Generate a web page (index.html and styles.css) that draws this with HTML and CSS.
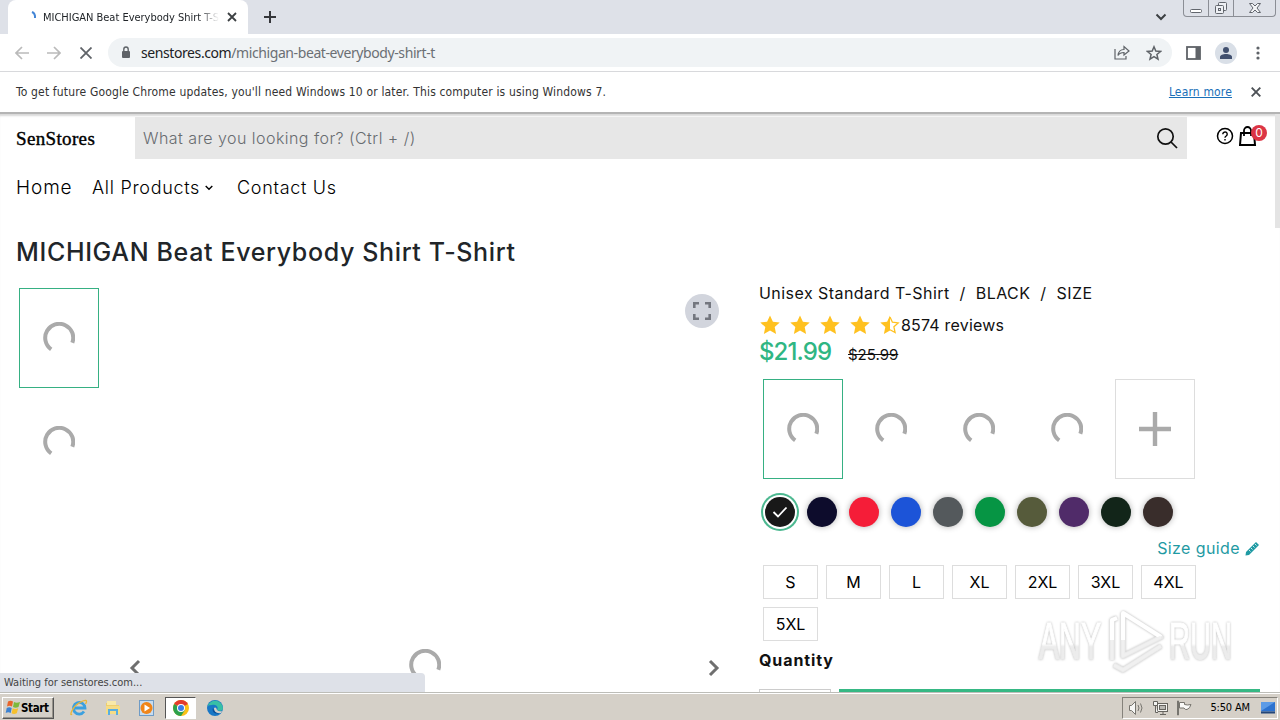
FILE: index.html
```
<!DOCTYPE html>
<html lang="en">
<head>
    <meta charset="UTF-8">
    <title>MICHIGAN Beat Everybody Shirt T-Shirt</title>
    <link rel="stylesheet" href="styles.css">
</head>
<body>
    <svg class="defs" width="0" height="0">
        <symbol id="spinner" viewBox="0 0 32 32">
            <path d="M8.2 27.3A14 14 0 1 1 29.3 20.8" fill="none" stroke="#aaa" stroke-width="4"/>
        </symbol>
        <symbol id="star" viewBox="0 0 20 20">
            <path d="M10 0.5l2.9 6.2 6.8.8-5 4.6 1.4 6.8L10 15.6l-6.1 3.3 1.4-6.8-5-4.6 6.8-.8z" fill="#ffc120"/>
        </symbol>
    </svg>

    <!-- Browser tabs -->
    <div class="tab-strip">
        <div class="tab">
            <svg class="tab-loader" width="16" height="16" viewBox="0 0 16 16"><path d="M7 3Q10.500 4.500 10 9" fill="none" stroke="#4285d6" stroke-width="2"/></svg>
            <span class="tab-title">MICHIGAN Beat Everybody Shirt T-Shirt</span>
            <svg width="10" height="10" viewBox="0 0 10 10"><path d="M1 1l8 8M9 1L1 9" stroke="#3c4043" stroke-width="1.8"/></svg>
        </div>
        <svg class="new-tab" width="12" height="12" viewBox="0 0 12 12"><path d="M6 0v12M0 6h12" stroke="#35363a" stroke-width="2"/></svg>
        <svg class="tab-search" width="12" height="8" viewBox="0 0 12 8"><path d="M1.5 1.5L6 6l4.500-4.500" fill="none" stroke="#3c4043" stroke-width="2"/></svg>
        <div class="window-buttons">
            <span><svg width="14" height="14" viewBox="0 0 14 14"><rect x="1.500" y="8.500" width="11" height="3" rx="1" fill="#fff" stroke="#62666d"/></svg></span>
            <span><svg width="14" height="14" viewBox="0 0 14 14" fill="#eef0f4" stroke="#62666d"><rect x="4.500" y="1.500" width="8" height="8" rx="1"/><rect x="1.500" y="4.500" width="8" height="8" rx="1"/><rect x="4.500" y="7.500" width="2" height="2"/></svg></span>
            <span class="wide"><svg width="14" height="12" viewBox="0 0 14 12"><path d="M1.500 1.500h3L7 4l2.500-2.500h3L9 6l3.500 4.500h-3L7 8l-2.500 2.500h-3L5 6z" fill="#f4f5f7" stroke="#62666d"/></svg></span>
        </div>
    </div>

    <!-- Address bar -->
    <div class="toolbar">
        <svg width="14" height="14" viewBox="0 0 14 14"><path d="M14 7H1M7 1L1 7l6 6" fill="none" stroke="#bababa" stroke-width="1.700"/></svg>
        <svg width="14" height="14" viewBox="0 0 14 14"><path d="M0 7h13M7 1l6 6-6 6" fill="none" stroke="#bababa" stroke-width="1.700"/></svg>
        <svg class="stop" width="12" height="12" viewBox="0 0 12 12"><path d="M.5.5l11 11M11.500.5l-11 11" stroke="#5f6368" stroke-width="1.800"/></svg>
        <div class="address">
            <svg width="10" height="13" viewBox="0 0 10 13"><rect x="1" y="5" width="8" height="7" rx="1" fill="#5f6368"/><path d="M2.800 5V3.200a2.200 2.200 0 0 1 4.400 0V5" fill="none" stroke="#5f6368" stroke-width="1.400"/></svg>
            <span class="url">senstores.com<i>/michigan-beat-everybody-shirt-t</i></span>
            <svg width="16" height="15" viewBox="0 0 16 15" fill="none" stroke="#5f6368" stroke-width="1.200"><path d="M1 4v10h11v-3"/><path d="M4 10.500C4.500 6 7 4.500 10 4.500V1.500l5 4.500-5 4V7.500C7.500 7.500 5.500 8 4 10.500z"/></svg>
            <svg width="16" height="16" viewBox="0 0 16 16"><path d="M8 1.800l1.800 4.300 4.700.4-3.600 3 1.100 4.600L8 11.700l-4 2.400 1.100-4.600-3.600-3 4.700-.4z" fill="none" stroke="#5f6368" stroke-width="1.500"/></svg>
        </div>
        <svg class="panel-icon" width="15" height="14" viewBox="0 0 15 14"><rect x="1" y="1" width="13" height="12" fill="none" stroke="#5f6368" stroke-width="1.800"/><path d="M9.500 1H14v12H9.500z" fill="#5f6368"/></svg>
        <div class="avatar"><svg width="14" height="14" viewBox="0 0 14 14" fill="#41506f"><circle cx="7" cy="4" r="3"/><path d="M1 13v-2c0-2 3-3 6-3s6 1 6 3v2z"/></svg></div>
        <svg class="menu-icon" width="4" height="14" viewBox="0 0 4 14" fill="#5f6368"><circle cx="2" cy="2" r="1.600"/><circle cx="2" cy="7" r="1.600"/><circle cx="2" cy="12" r="1.600"/></svg>
    </div>

    <div class="infobar">
        <span class="info-text">To get future Google Chrome updates, you'll need Windows 10 or later. This computer is using Windows 7.</span>
        <a class="learn">Learn more</a>
        <svg width="10" height="10" viewBox="0 0 10 10"><path d="M.7.7l8.600 8.600M9.300.7L.7 9.300" stroke="#4d5156" stroke-width="1.900"/></svg>
    </div>

    <!-- Store page -->
    <div class="page">
        <div class="scroll-thumb"></div>
        <header class="store-header">
            <div class="logo">SenStores</div>
            <div class="search">
                <span class="placeholder">What are you looking for? (Ctrl + /)</span>
                <svg width="22" height="22" viewBox="0 0 22 22" fill="none" stroke="#111" stroke-width="1.700"><circle cx="9.500" cy="9.500" r="7.700"/><path d="M15 15l6 6"/></svg>
            </div>
            <div class="header-icons">
                <svg width="18" height="18" viewBox="0 0 18 18"><circle cx="9" cy="9" r="7.500" fill="none" stroke="#000" stroke-width="1.500"/><path d="M6.800 7.200a2.200 2.200 0 1 1 3.400 1.800C9.300 9.600 9 9.900 9 10.800M9 12v1.500" fill="none" stroke="#000" stroke-width="1.400"/></svg>
                <div class="cart">
                    <svg width="18" height="22" viewBox="0 0 18 22" fill="none" stroke="#000" stroke-width="2"><path d="M2 8h13l1 12H1z"/><path d="M5 11V5.500a3.500 3.500 0 0 1 7 0V11" stroke-width="1.800"/></svg>
                    <span class="badge">0</span>
                </div>
            </div>
        </header>

        <nav class="menu">
            <a class="m-home">Home</a>
            <a class="m-products">All Products</a>
            <svg width="8" height="6" viewBox="0 0 8 6"><path d="M.7 1L4 4.300 7.300 1" fill="none" stroke="#000" stroke-width="1.400"/></svg>
            <a class="m-contact">Contact Us</a>
        </nav>

        <h1>MICHIGAN Beat Everybody Shirt T-Shirt</h1>

        <div class="product">
            <div class="thumbs">
                <div class="tile active"><svg class="spin"><use href="#spinner"/></svg></div>
                <div class="tile"><svg class="spin"><use href="#spinner"/></svg></div>
            </div>
            <div class="gallery">
                <svg class="arrow" width="12" height="18" viewBox="0 0 12 18"><path d="M10 2L3 9l7 7" fill="none" stroke="#6f6f6f" stroke-width="3"/></svg>
                <svg class="spin"><use href="#spinner"/></svg>
                <svg class="arrow" width="12" height="18" viewBox="0 0 12 18"><path d="M2 2l7 7-7 7" fill="none" stroke="#6f6f6f" stroke-width="3"/></svg>
                <div class="fullscreen"><svg width="18" height="18" viewBox="0 0 18 18"><path d="M1.300 6V1.300H6M12 1.300h4.700V6M16.700 12v4.700H12M6 16.700H1.300V12" fill="none" stroke="#74777f" stroke-width="2.600"/></svg></div>
            </div>

            <div class="details">
                <div class="variant">Unisex Standard T-Shirt &nbsp;/&nbsp; BLACK &nbsp;/&nbsp; SIZE</div>
                <div class="rating">
                    <svg><use href="#star"/></svg>
                    <svg><use href="#star"/></svg>
                    <svg><use href="#star"/></svg>
                    <svg><use href="#star"/></svg>
                    <svg viewBox="0 0 20 20"><path d="M10 .5v15.100l-6.100 3.300 1.400-6.800-5-4.600 6.800-.8z" fill="#ffc120"/><path d="M10 2l2.400 5.200 5.800.7-4.300 3.900 1.200 5.700L10 14.700" fill="none" stroke="#ffc120" stroke-width="1.300"/></svg>
                    <span class="reviews">8574 reviews</span>
                </div>
                <div class="prices"><span class="price">$21.99</span><s>$25.99</s></div>
                <div class="styles">
                    <div class="tile active"><svg class="spin"><use href="#spinner"/></svg></div>
                    <div class="tile"><svg class="spin"><use href="#spinner"/></svg></div>
                    <div class="tile"><svg class="spin"><use href="#spinner"/></svg></div>
                    <div class="tile"><svg class="spin"><use href="#spinner"/></svg></div>
                    <div class="tile more"><svg width="32" height="34" viewBox="0 0 32 34"><path d="M16 0v34M0 17h32" stroke="#aaa" stroke-width="4.400"/></svg></div>
                </div>
                <div class="colors">
                    <span class="black"><svg width="16" height="12" viewBox="0 0 16 12"><path d="M1.500 6l4.500 4.500L14.500 1.500" fill="none" stroke="#fff" stroke-width="1.800"/></svg></span>
                    <span class="navy"></span>
                    <span class="red"></span>
                    <span class="royal"></span>
                    <span class="charcoal"></span>
                    <span class="green"></span>
                    <span class="military"></span>
                    <span class="purple"></span>
                    <span class="forest"></span>
                    <span class="brown"></span>
                </div>
                <div class="size-guide">
                    <span>Size guide</span>
                    <svg width="15" height="15" viewBox="0 0 15 15"><path d="M1 11L11 1l3 3L4 14l-3.500.5z" fill="#1f9aa3"/><path d="M4 9l1.500 1.500M6 7l1.500 1.500M8 5l1.500 1.500M10 3l1.500 1.500" stroke="#fff" stroke-width=".8"/></svg>
                </div>
                <div class="sizes">
                    <span>S</span><span>M</span><span>L</span><span>XL</span><span>2XL</span><span>3XL</span><span>4XL</span><span>5XL</span>
                </div>
                <div class="quantity">Quantity</div>
                <div class="buy-row">
                    <div class="qty-input"></div>
                    <div class="add-to-cart"></div>
                </div>
            </div>
        </div>

        <div class="status">Waiting for senstores.com...</div>

        <svg class="watermark" width="200" height="68" viewBox="0 0 200 68">
            <defs>
                <linearGradient id="fade" x1="0" y1="0" x2="0" y2="1">
                    <stop offset=".55" stop-color="#fff"/>
                    <stop offset=".6" stop-color="#ececec"/>
                </linearGradient>
            </defs>
            <g font-family="Liberation Sans Narrow, Liberation Sans, sans-serif" font-size="52" fill="url(#fade)" stroke="url(#fade)" stroke-width="1.200">
                <text x="2" y="51" textLength="62" lengthAdjust="spacingAndGlyphs">ANY</text>
                <text x="132" y="51" textLength="63" lengthAdjust="spacingAndGlyphs">RUN</text>
            </g>
            <g fill="none" stroke-linejoin="round">
                <path d="M75 52V12l5-2M86 5v43l38-19L86 5M77 57l9 5 38-24" stroke="#e9e9e9" stroke-width="5"/>
                <path d="M75 32V12l5-2M86 32V5l38 24" stroke="#fff" stroke-width="4"/>
                <path d="M75 32v20M86 32v16l38-19M77 57l9 5 38-24" stroke="#f0f0f0" stroke-width="3"/>
            </g>
        </svg>
    </div>

    <!-- Windows taskbar -->
    <div class="taskbar">
        <div class="start">
            <svg width="16" height="15" viewBox="0 0 16 15"><path d="M3 1.500q2.500-1.500 5 0L7 6.500q-2.500-1.300-5 0z" fill="#e8642a"/><path d="M9 2q2.500 1.300 6 0l-1.500 5q-3 1.300-5.500 0z" fill="#7db93c"/><path d="M1.700 8q2.500-1.300 5 0l-1 5q-2.500-1.500-5 0z" fill="#3c82d2"/><path d="M7.700 8.300q2.500 1.300 5.500 0l-1.400 5q-3 1.300-5.200 0z" fill="#f6c02d"/></svg>
            <b>Start</b>
        </div>
        <div class="task"><svg width="18" height="18" viewBox="0 0 18 18" fill="none"><path d="M14 12.500A5.800 5.800 0 1 1 15 9H5" stroke="#3ba0df" stroke-width="2.800"/><path d="M2 15C-1 18 2 8 9 4s9-3 6.500 1" stroke="#e9b63a" stroke-width="1.300"/></svg></div>
        <div class="task"><svg width="18" height="18" viewBox="0 0 18 18"><path d="M2 4h5l1 2h7v9H2z" fill="#edcf6e"/><path d="M3 2h9v4H3z" fill="#f8e9a9"/><path d="M2 7h14v8H2z" fill="#f5dc86"/><path d="M5 16v-5h8v5" fill="none" stroke="#59aee0" stroke-width="2"/></svg></div>
        <div class="task"><svg width="18" height="18" viewBox="0 0 18 18"><rect x="1.500" y="1.500" width="14" height="15" fill="#c8dcef" stroke="#6e9bc6"/><circle cx="8.500" cy="9" r="6" fill="#f08519"/><path d="M6.500 5.500v7l5.500-3.500z" fill="#fff"/></svg></div>
        <div class="task current"><svg width="16" height="16" viewBox="0 0 16 16"><circle cx="8" cy="8" r="8" fill="#fbc116"/><path d="M8 8L1.100 4A8 8 0 0 1 14.900 4z" fill="#e33b2e"/><path d="M8 8L1.100 4A8 8 0 0 0 8 16l4-6z" fill="#2da14c"/><circle cx="8" cy="8" r="4" fill="#fff"/><circle cx="8" cy="8" r="3" fill="#3b7de8"/></svg></div>
        <div class="task"><svg width="16" height="16" viewBox="0 0 16 16"><circle cx="8" cy="8" r="8" fill="#1877c5"/><path d="M.5 6A8 8 0 0 1 16 8c0 3-4 3.500-6 2 2-3-1-6-5-5Q2 5 .5 6z" fill="#38bfa5"/><path d="M6 8c-1.500 4 2 6.500 7 5.500A8 8 0 0 1 6 8z" fill="#0c4f98"/><path d="M7 8q2-1.500 3 2 2 2 5 1l-1 2Q7 14 7 8z" fill="#d5d0c8"/></svg></div>
        <div class="tray">
            <svg width="17" height="16" viewBox="0 0 17 16" fill="#f7f7f5" stroke="#77756f"><path d="M1.500 5.500h2l4-4v13l-4-4h-2z"/><path d="M10 5q2 3 0 6M12.500 3.500q3 4.500 0 9" fill="none"/></svg>
            <svg width="17" height="16" viewBox="0 0 17 16" fill="#f3f3f0" stroke="#66645f"><rect x="5.500" y="3.500" width="10" height="8"/><rect x="7.500" y="5.500" width="6" height="4" fill="#b9b8b3"/><path d="M8 14.500h6M11 12v2M1.500 1.500h4v4h-4zM3.500 6v6.500H6"/></svg>
            <svg width="17" height="16" viewBox="0 0 17 16" fill="#fafaf8" stroke="#77756f"><path d="M1.500 1v14h1V1zM3.500 2.500h5v2q3 1 6.500 0-1 4-4 5-2 .5-3-1.500h-4.500z"/></svg>
            <span class="clock">5:50 AM</span>
            <svg width="16" height="14" viewBox="0 0 16 14"><path d="M1 1h14v9.500H1z" fill="#2c72cf"/><path d="M1 10V1h14z" fill="#5c9be6"/><path d="M1 10.500h14v2H1z" fill="#234679"/></svg>
        </div>
    </div>
</body>
</html>
```
FILE: styles.css
```
* {
    box-sizing: border-box;
}

body {
    margin: 0;
    width: 1280px;
    height: 720px;
    overflow: hidden;
    display: flex;
    flex-direction: column;
    background: #fff;
    color: #212529;
    font-family: "DejaVu Sans Condensed", "DejaVu Sans", sans-serif;
    font-size: 11px;
}

svg {
    display: block;
    flex-shrink: 0;
}

.defs {
    position: absolute;
}

/* Browser chrome */
.tab-strip {
    height: 34px;
    flex-shrink: 0;
    display: flex;
    align-items: center;
    background: #dee1e8;
}

.tab {
    width: 240px;
    height: 34px;
    margin-left: 8px;
    padding: 0 11px 0 17px;
    display: flex;
    align-items: center;
    background: #fff;
    border-radius: 8px 8px 0 0;
}

.tab-title {
    width: 176px;
    margin: 0 8px 0 2px;
    overflow: hidden;
    white-space: nowrap;
    letter-spacing: -0.02px;
    -webkit-mask-image: linear-gradient(90deg, #000 155px, transparent 176px);
    mask-image: linear-gradient(90deg, #000 155px, transparent 176px);
}

.new-tab {
    margin-left: 16px;
}

.tab-search {
    margin-left: auto;
}

.window-buttons {
    height: 17px;
    margin: 0 4px 0 16px;
    align-self: flex-start;
    display: flex;
    border: 1px solid #8b8e95;
    border-top: none;
    border-radius: 0 0 4px 4px;
}

.window-buttons span {
    width: 25px;
    display: flex;
    align-items: center;
    justify-content: center;
    border-right: 1px solid #8b8e95;
}

.window-buttons .wide {
    width: 41px;
    border: none;
}

.toolbar {
    height: 38px;
    flex-shrink: 0;
    display: flex;
    align-items: center;
    padding: 0 15px;
    gap: 18px;
    border-bottom: 1px solid #d8d9dc;
}

.stop {
    margin-left: 1px;
}

.address {
    width: 1064px;
    height: 29px;
    margin-left: -2px;
    padding: 0 10px 0 13px;
    display: flex;
    align-items: center;
    gap: 16px;
    border-radius: 15px;
    background: #f0f3f5;
}

.url {
    flex: 1;
    margin-left: -6px;
    font-family: "Noto Sans", sans-serif;
    font-size: 14px;
    letter-spacing: -0.41px;
    color: #202124;
}

.url i {
    font-style: normal;
    color: #6b6f74;
}

.panel-icon {
    margin-left: -4px;
}

.avatar {
    width: 22px;
    height: 22px;
    margin-left: -4px;
    display: flex;
    align-items: center;
    justify-content: center;
    border-radius: 50%;
    background: #d9dfe7;
}

.menu-icon {
    margin-left: 1px;
}

.infobar {
    height: 42px;
    flex-shrink: 0;
    display: flex;
    align-items: center;
    padding: 0 19px 1px 16px;
    border-bottom: 2px solid #b4b4b4;
    font-size: 12px;
    letter-spacing: 0.16px;
    color: #333;
}

.learn {
    margin: 0 19px 0 auto;
    color: #1a6fb8;
    text-decoration: underline;
}

/* Store */
.page {
    position: relative;
    height: 578px;
    flex-shrink: 0;
    overflow: hidden;
    font-family: Inter, sans-serif;
    box-shadow: inset 0 3px 2px -1px #d8d8d8;
}

.scroll-thumb {
    position: absolute;
    right: 0;
    top: 0;
    width: 5px;
    height: 114px;
    background: #e4e4e4;
}

.store-header {
    height: 42px;
    margin-top: 3px;
    padding-left: 16px;
    display: flex;
}

.logo {
    width: 119px;
    padding-top: 11px;
    font-family: "Liberation Serif", serif;
    font-size: 19px;
    line-height: 22px;
    letter-spacing: 0.35px;
    color: #000;
    -webkit-text-stroke: 0.4px #000;
}

.search {
    width: 1052px;
    padding: 0 9px 0 8px;
    display: flex;
    align-items: center;
    justify-content: space-between;
    background: #e7e7e7;
    font-size: 16px;
    letter-spacing: 0.45px;
    color: #686c70;
}

.placeholder {
    font-weight: 300;
}

.header-icons {
    margin-left: 29px;
    padding-top: 8px;
    display: flex;
    gap: 5px;
}

.header-icons > svg {
    margin-top: 2px;
}

.cart {
    position: relative;
}

.badge {
    position: absolute;
    left: 12px;
    top: 0;
    width: 16px;
    height: 16px;
    border-radius: 50%;
    background: #dc3545;
    color: #fff;
    font-size: 12px;
    line-height: 16px;
    text-align: center;
}

.menu {
    height: 57px;
    padding-left: 16px;
    display: flex;
    align-items: center;
    font-size: 18px;
    font-weight: 300;
    letter-spacing: 0.7px;
    color: #000;
}

.m-home {
    width: 76px;
    font-size: 19px;
    letter-spacing: 0.9px;
}

.m-products {
    width: 113px;
}

.m-contact {
    margin-left: 24px;
}

h1 {
    height: 72px;
    margin: 0;
    padding-left: 16px;
    font-size: 25px;
    font-weight: 500;
    line-height: 73px;
    letter-spacing: 0.64px;
}

.product {
    display: flex;
    padding-left: 19px;
}

.thumbs {
    width: 100px;
    display: flex;
    flex-direction: column;
    gap: 4px;
}

.tile {
    width: 80px;
    height: 100px;
    display: flex;
    align-items: center;
    justify-content: center;
}

.tile.active {
    border: 1px solid #36b083;
}

.tile.more {
    border: 1px solid #ddd;
}

.spin {
    width: 32px;
    height: 32px;
}

.gallery {
    position: relative;
    width: 612px;
    height: 760px;
    padding: 0 11px 0 10px;
    display: flex;
    align-items: center;
    justify-content: space-between;
}

.gallery .spin {
    margin-bottom: 6px;
}

.fullscreen {
    position: absolute;
    right: 12px;
    top: 6px;
    width: 34px;
    height: 34px;
    display: flex;
    align-items: center;
    justify-content: center;
    border-radius: 50%;
    background: #d2d5dd;
}

.details {
    width: 501px;
    margin-left: 28px;
    margin-top: -8px;
    font-size: 16px;
    color: #111;
}

.variant {
    height: 28px;
    line-height: 26px;
    letter-spacing: 0.45px;
    white-space: nowrap;
}

.rating {
    height: 34px;
    display: flex;
    align-items: center;
    gap: 8px;
}

.rating svg {
    width: 22px;
    height: 20px;
}

.reviews {
    margin-left: -8px;
    letter-spacing: 0.2px;
}

.prices {
    height: 37px;
    display: flex;
    align-items: baseline;
    line-height: 20px;
}

.price {
    width: 89px;
    font-size: 24px;
    font-weight: 500;
    letter-spacing: -0.9px;
    color: #2fb683;
}

.prices s {
    font-size: 15px;
}

.styles {
    display: flex;
    gap: 8px;
    padding-left: 4px;
}

.colors {
    height: 59px;
    padding: 7px 0 0 6px;
    display: flex;
    align-items: center;
    gap: 12px;
}

.colors span {
    width: 30px;
    height: 30px;
    display: flex;
    align-items: center;
    justify-content: center;
    border-radius: 50%;
    box-shadow: 0 0 6px rgba(0, 0, 0, 0.3);
}

.colors .black {
    background: #181818;
    box-shadow: 0 0 0 2px #fff, 0 0 0 4px #4cb890;
}

.navy { background: #0d0c2c; }
.red { background: #f51d38; }
.royal { background: #1c54d8; }
.charcoal { background: #54595c; }
.green { background: #069544; }
.military { background: #565b3b; }
.purple { background: #502b69; }
.forest { background: #122519; }
.brown { background: #392d2b; }

.size-guide {
    height: 20px;
    margin-bottom: 7px;
    display: flex;
    justify-content: flex-end;
    align-items: center;
    gap: 5px;
    line-height: 20px;
    letter-spacing: 0.4px;
    color: #1f9aa3;
}

.sizes {
    width: 445px;
    display: flex;
    flex-wrap: wrap;
    gap: 8px;
    padding-left: 4px;
}

.sizes span {
    width: 55px;
    height: 34px;
    border: 1px solid #ddd;
    line-height: 32px;
    text-align: center;
    color: #000;
}

.quantity {
    height: 48px;
    line-height: 39px;
    font-weight: 700;
    letter-spacing: 0.9px;
}

.buy-row {
    display: flex;
    gap: 8px;
}

.qty-input {
    width: 72px;
    height: 40px;
    border: 1px solid #ccc;
}

.add-to-cart {
    flex: 1;
    height: 40px;
    background: #36b884;
}

.status {
    position: absolute;
    left: 0;
    bottom: 0;
    width: 425px;
    height: 19px;
    padding-left: 4px;
    border-radius: 0 4px 0 0;
    background: #dee1e8;
    font: 11px/20px "DejaVu Sans Condensed", sans-serif;
    color: #444;
}

.watermark {
    position: absolute;
    left: 1037px;
    top: 494px;
    filter: drop-shadow(0 0 1px #bbb);
}

/* Taskbar */
.taskbar {
    height: 28px;
    flex-shrink: 0;
    display: flex;
    align-items: center;
    padding: 2px 2px 0;
    border-top: 1px solid #bdbdb8;
    box-shadow: inset 0 1px #fff;
    background: #d5d0c8;
    color: #000;
}

.start {
    width: 52px;
    height: 22px;
    margin-right: 9px;
    padding-left: 2px;
    display: flex;
    align-items: center;
    border: 1px solid;
    border-color: #fff #555 #555 #fff;
    box-shadow: inset -1px -1px #98948c;
}

.start b {
    font-size: 11.5px;
    letter-spacing: -0.35px;
}

.task {
    width: 31px;
    height: 22px;
    margin-right: 3px;
    display: flex;
    align-items: center;
    justify-content: center;
}

.task.current {
    border: 1px solid;
    border-color: #555 #fff #fff #555;
    background: #fff;
}

.tray {
    width: 156px;
    height: 22px;
    margin-left: auto;
    padding: 0 1px 0 5px;
    display: flex;
    align-items: center;
    gap: 7px;
    border: 1px solid;
    border-color: #85827b #fff #fff #85827b;
}

.clock {
    margin: 0 3px 0 auto;
    letter-spacing: -0.15px;
}
```
